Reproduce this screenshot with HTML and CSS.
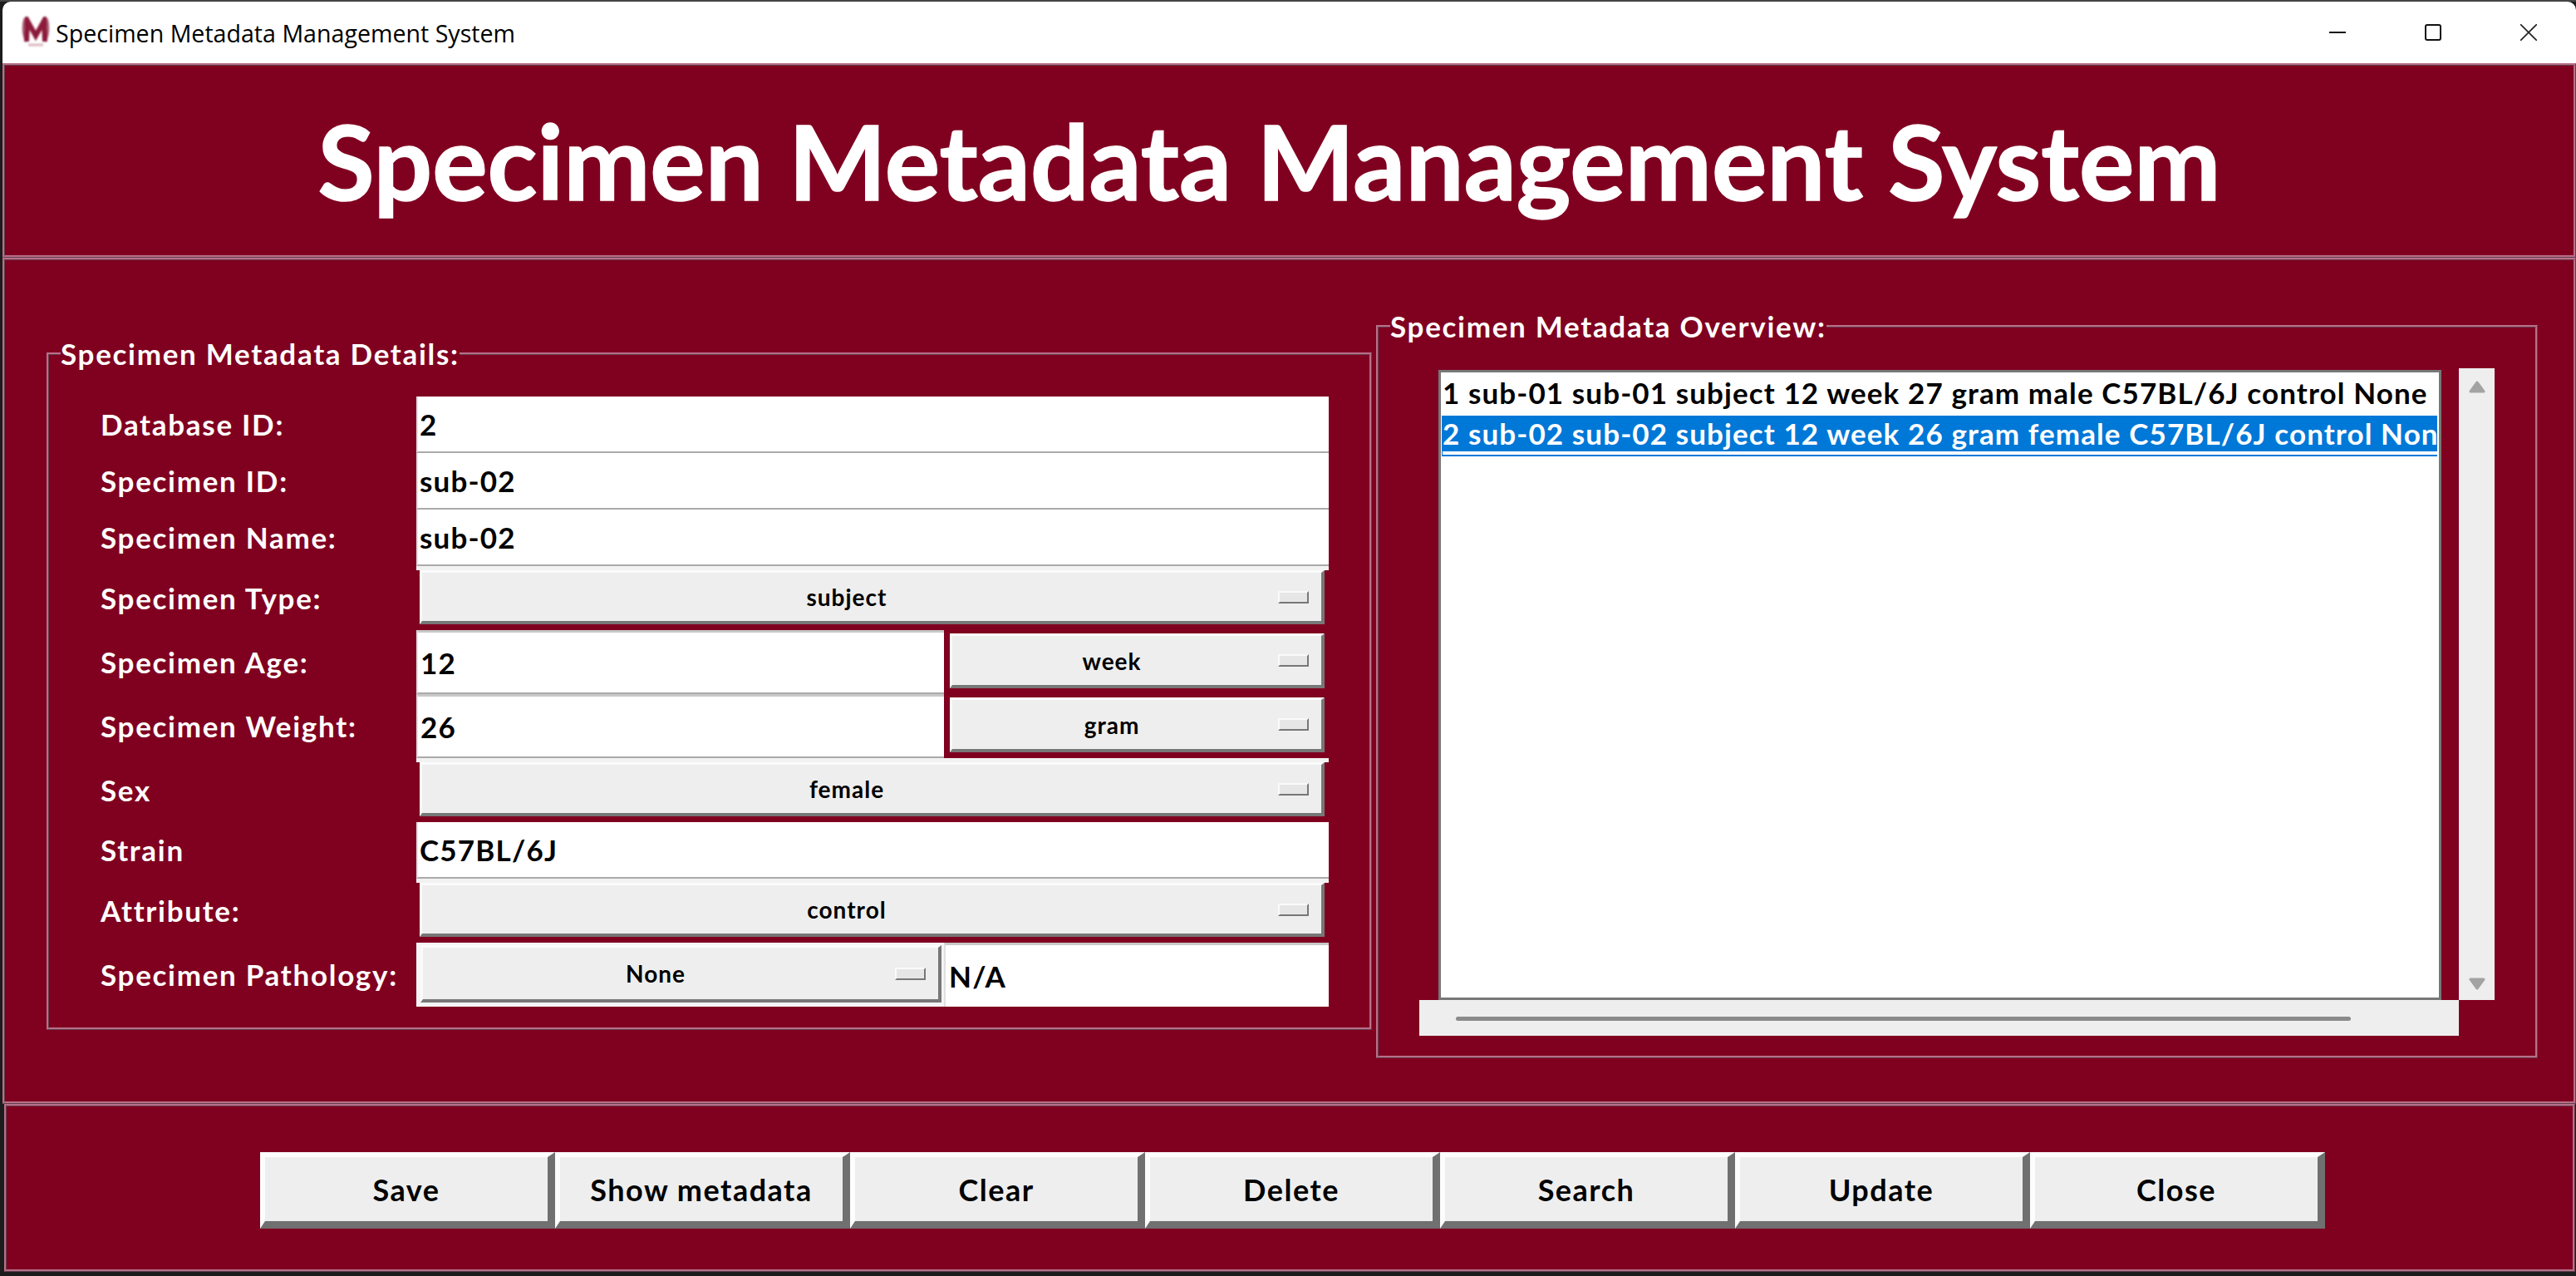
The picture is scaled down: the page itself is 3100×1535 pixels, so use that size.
FILE: index.html
```html
<!DOCTYPE html>
<html lang="en">
  <head>
    <meta charset="UTF-8" />
    <title>Specimen Metadata Management System</title>
    <link rel="stylesheet" href="styles.css">
  </head>
  <body>
    <div class="window">
      <div class="titlebar">
        <svg class="logo" viewBox="0 0 34 38" width="34" height="38">
          <path d="M4 2 C1 12 2 22 6 30 M30 2 C33 12 32 22 28 30" fill="none" stroke="#a65a70" stroke-width="3" />
          <path d="M6 30 L7 5 L17 23 L27 5 L28 30" fill="none" stroke="#8c1a3a" stroke-width="6" />
          <path d="M8 34 H26" stroke="#d9b8c2" stroke-width="3" />
        </svg>
        <span class="titlebar-text">Specimen Metadata Management System</span>
        <div class="controls">
          <div class="control">
            <svg viewBox="0 0 20 20" width="20" height="20"><path d="M0 10 H20" stroke="#111" stroke-width="2" /></svg>
          </div>
          <div class="control">
            <svg viewBox="0 0 20 20" width="20" height="20"><rect x="1" y="1" width="18" height="18" rx="2" fill="none" stroke="#111" stroke-width="2" /></svg>
          </div>
          <div class="control">
            <svg viewBox="0 0 20 20" width="20" height="20"><path d="M0 0 L20 20 M20 0 L0 20" stroke="#222" stroke-width="1.6" /></svg>
          </div>
        </div>
      </div>

      <div class="frame header-frame">
        <h1>Specimen Metadata Management System</h1>
      </div>

      <div class="frame main-frame">
        <fieldset class="panel details-panel">
          <legend>Specimen Metadata Details:</legend>
          <div class="form">
            <div class="row row-entry">
              <div class="label">Database ID:</div>
              <div class="entry">2</div>
            </div>
            <div class="row row-entry">
              <div class="label">Specimen ID:</div>
              <div class="entry">sub-02</div>
            </div>
            <div class="row row-entry">
              <div class="label">Specimen Name:</div>
              <div class="entry">sub-02</div>
            </div>
            <div class="row row-menu">
              <div class="label">Specimen Type:</div>
              <div class="menu-wrap strip">
                <div class="menu"><span class="menu-text">subject</span><span class="indicator"></span></div>
              </div>
            </div>
            <div class="row row-menu">
              <div class="label">Specimen Age:</div>
              <div class="entry entry-half">12</div>
              <div class="menu-wrap menu-half">
                <div class="menu"><span class="menu-text">week</span><span class="indicator"></span></div>
              </div>
            </div>
            <div class="row row-menu">
              <div class="label">Specimen Weight:</div>
              <div class="entry entry-half">26</div>
              <div class="menu-wrap menu-half">
                <div class="menu"><span class="menu-text">gram</span><span class="indicator"></span></div>
              </div>
            </div>
            <div class="row row-menu">
              <div class="label">Sex</div>
              <div class="menu-wrap strip">
                <div class="menu"><span class="menu-text">female</span><span class="indicator"></span></div>
              </div>
            </div>
            <div class="row row-entry">
              <div class="label">Strain</div>
              <div class="entry">C57BL/6J</div>
            </div>
            <div class="row row-menu">
              <div class="label">Attribute:</div>
              <div class="menu-wrap strip">
                <div class="menu"><span class="menu-text">control</span><span class="indicator"></span></div>
              </div>
            </div>
            <div class="row row-menu">
              <div class="label">Specimen Pathology:</div>
              <div class="menu-wrap pathology-menu">
                <div class="menu"><span class="menu-text">None</span><span class="indicator"></span></div>
              </div>
              <div class="entry entry-note">N/A</div>
            </div>
          </div>
        </fieldset>

        <fieldset class="panel overview-panel">
          <legend>Specimen Metadata Overview:</legend>
          <div class="overview">
            <ul class="listbox">
              <li>1 sub-01 sub-01 subject 12 week 27 gram male C57BL/6J control None N/A</li>
              <li class="selected">2 sub-02 sub-02 subject 12 week 26 gram female C57BL/6J control None N/A</li>
            </ul>
            <div class="vscroll">
              <svg viewBox="0 0 20 15" width="20" height="15"><path d="M10 2 L18 13 H2 Z" fill="#a3a3a3" stroke="#a3a3a3" stroke-width="3" stroke-linejoin="round" /></svg>
              <svg viewBox="0 0 20 15" width="20" height="15"><path d="M2 2 H18 L10 13 Z" fill="#a3a3a3" stroke="#a3a3a3" stroke-width="3" stroke-linejoin="round" /></svg>
            </div>
            <div class="hscroll"><div class="hscroll-thumb"></div></div>
          </div>
        </fieldset>
      </div>

      <div class="frame bottom-frame">
        <button class="action">Save</button>
        <button class="action">Show metadata</button>
        <button class="action">Clear</button>
        <button class="action">Delete</button>
        <button class="action">Search</button>
        <button class="action">Update</button>
        <button class="action">Close</button>
      </div>
    </div>
  </body>
</html>
```

FILE: styles.css
```css
* {
  box-sizing: border-box;
}

html,
body {
  margin: 0;
  height: 100%;
}

body {
  background: #1c1c1c;
  overflow: hidden;
  font-family: Lato, "Liberation Sans", sans-serif;
  font-weight: bold;
}

.window {
  width: 3100px;
  height: 1530px;
  border-top: 2px solid #444;
}

.titlebar {
  height: 74px;
  margin-left: 3px;
  background: #fff;
  border-radius: 10px 10px 0 0;
  display: flex;
  align-items: center;
  padding-left: 23px;
}

.logo {
  filter: blur(1px);
  flex: none;
}

.titlebar-text {
  margin-left: 7px;
  font-family: "Open Sans", sans-serif;
  font-weight: normal;
  font-size: 28.6px;
  color: #000;
}

.controls {
  margin-left: auto;
  display: flex;
}

.control {
  width: 115px;
  height: 74px;
  display: flex;
  align-items: center;
  justify-content: center;
}

.frame {
  background: #800020;
  border: 3px ridge #b8708a;
  margin-left: 3px;
}

.header-frame {
  height: 234px;
  display: flex;
  align-items: center;
  justify-content: center;
  padding-right: 48px;
}

h1 {
  margin: 0;
  color: #fff;
  font-size: 124.4px;
  line-height: 1;
  -webkit-text-stroke: 1.5px #fff;
}

.main-frame {
  height: 1018px;
  display: flex;
  align-items: flex-start;
  padding-left: 50px;
  gap: 5px;
}

.panel {
  margin: 0;
  padding: 0;
  min-width: 0;
  border: 3px ridge #b8708a;
}

.panel legend {
  padding: 0;
  margin-left: 14px;
  color: #fff;
  font-size: 35px;
  letter-spacing: 1.7px;
  line-height: 40px;
}

.details-panel {
  width: 1595px;
  margin-top: 92px;
}

.overview-panel {
  width: 1398px;
  margin-top: 59px;
}

.form {
  padding: 32px 49px 25px 62px;
}

.row {
  display: flex;
}

.row-entry {
  height: 68px;
}

.row-menu {
  height: 77px;
}

.label {
  width: 380px;
  flex: none;
  display: flex;
  align-items: center;
  padding-bottom: 2px;
  color: #fff;
  font-size: 35px;
  letter-spacing: 1.7px;
}

.entry {
  flex: 1;
  display: flex;
  align-items: center;
  padding-left: 2px;
  background: #fff;
  color: #000;
  font-size: 35px;
  letter-spacing: 1.2px;
  border-left: 2px solid #e0e0e0;
  border-bottom: 2px solid #aaa;
}

.entry-half {
  flex: none;
  width: 635px;
  padding-left: 3px;
  border-top: 3px solid #c8c8c8;
}

.entry-note {
  border-top: 3px solid #c8c8c8;
  border-bottom: none;
  padding-left: 4px;
}

.menu-wrap {
  flex: 1;
  padding: 5px 5px 7px 4px;
}

.menu-half {
  padding: 4px 5px 7px 7px;
}

.strip {
  border-top: 5px solid #f2f2f2;
  padding-top: 0;
}

.pathology-menu {
  flex: none;
  width: 635px;
  padding: 3px 3px 5px 5px;
  background: #f4f4f4;
}

.menu {
  height: 100%;
  display: flex;
  align-items: center;
  background: #eee;
  color: #000;
  font-size: 28px;
  letter-spacing: 1px;
  border-style: solid;
  border-width: 3px 4px 4px 3px;
  border-color: #fbfbfb #777 #777 #fbfbfb;
}

.menu-text {
  flex: 1;
  text-align: center;
}

.indicator {
  flex: none;
  width: 37px;
  height: 15px;
  margin: 0 15px 0 8px;
  background: #e6e6e6;
  border-style: solid;
  border-width: 2px;
  border-color: #fafafa #777 #777 #fafafa;
}

.overview {
  display: grid;
  grid-template-columns: 23px 1207px 21px 43px;
  grid-template-rows: 758px 43px;
  padding: 33px 0 24px 49px;
}

.listbox {
  grid-column: 2;
  grid-row: 1;
  margin: 0;
  padding: 3px 2px 0 1px;
  list-style: none;
  overflow: hidden;
  background: #fff;
  border: 3px solid #777;
  color: #000;
  font-size: 35px;
  letter-spacing: 1.1px;
}

.listbox li {
  height: 49px;
  line-height: 43px;
  padding-left: 1px;
  white-space: nowrap;
  overflow: hidden;
}

.listbox .selected {
  background: #0078d7;
  color: #fff;
  text-decoration: underline;
  text-decoration-thickness: 4px;
  text-underline-offset: 8px;
}

.vscroll {
  grid-column: 4;
  grid-row: 1;
  margin-top: -2px;
  background: #eee;
  display: flex;
  flex-direction: column;
  align-items: center;
  justify-content: space-between;
  padding: 15px 0 12px;
}

.hscroll {
  grid-column: 1 / 4;
  grid-row: 2;
  background: #eee;
  padding: 20px 130px 0 44px;
}

.hscroll-thumb {
  height: 5px;
  border-radius: 3px;
  background: #8a8a8a;
}

.bottom-frame {
  height: 202px;
  margin-left: 5px;
  margin-right: 1px;
  display: flex;
  align-items: flex-start;
  padding: 55px 0 0 305px;
}

.action {
  width: 355px;
  height: 92px;
  padding: 0;
  background: #eee;
  color: #000;
  font-family: inherit;
  font-weight: bold;
  font-size: 36px;
  letter-spacing: 1.5px;
  border-style: solid;
  border-width: 6px 9px 9px 6px;
  border-color: #fdfdfd #707070 #707070 #fdfdfd;
}
```
